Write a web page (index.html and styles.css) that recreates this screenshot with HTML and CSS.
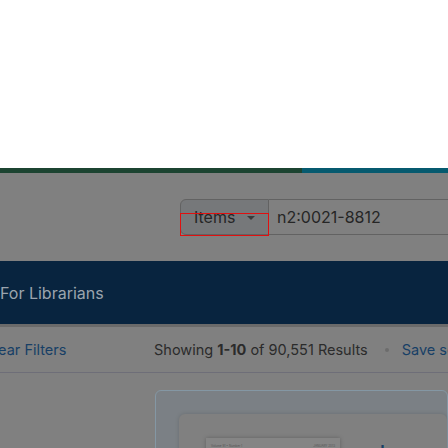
FILE: index.html
```html
<!DOCTYPE html>
<html>
<head>
<meta charset="utf-8">
<link rel="stylesheet" href="styles.css">
</head>
<body>
<div class="top"></div>
<div class="stripe"><div class="green"></div><div class="teal"></div></div>
<div class="page">
  <div class="search-row">
    <div class="search">
      <div class="select">Items <span class="caret"></span></div>
      <div class="input">n2:0021-8812</div>
      <div class="focus"></div>
    </div>
  </div>
  <div class="banner"><span class="banner-text">For Librarians</span></div>
  <div class="bar">
    <div class="clear">Clear Filters</div>
    <div class="showing">Showing <b>1-10</b> of 90,551 Results</div>
    <span class="dot"></span>
    <div class="save">Save search</div>
  </div>
  <div class="results">
    <div class="outer">
      <div class="inner">
        <div class="thumb">
          <span class="vol">Volume 91 • Number 1</span>
          <span class="date">JANUARY 2013</span>
        </div>
        <div class="title">Journal of</div>
      </div>
    </div>
  </div>
</div>
</body>
</html>
```
FILE: styles.css
```css
html, body { margin: 0; padding: 0; }
body {
  width: 448px; height: 448px; overflow: hidden;
  background: #fff;
  font-family: Inter, "Noto Sans", sans-serif;
}
.top { height: 168px; background: #fff; }
.stripe { display: flex; height: 5px; }
.green { width: 302px; background: #1c4431; }
.teal { flex: 1; background: #065a6f; }
.page { background: #808080; height: 275px; overflow: hidden; }
.search-row { padding: 26px 0 0 180px; height: 88px; box-sizing: border-box; }
.search { position: relative; display: flex; height: 36px; width: 300px; }
.select {
  width: 89px; box-sizing: border-box; flex-shrink: 0;
  border: 1px solid #626262; border-radius: 6px 0 0 6px;
  background: #76787a;
  display: flex; align-items: center; padding-left: 13px;
  font-size: 16px; color: #262626; gap: 12px;
}
.caret {
  width: 0; height: 0;
  border-left: 4px solid transparent; border-right: 4px solid transparent;
  border-top: 4px solid #3a3a3a; margin-top: 1px;
}
.input {
  flex: 1; border: 1px solid #626262; border-left: none;
  display: flex; align-items: center; padding-left: 8px;
  font-size: 16px; color: #262626; white-space: nowrap;
}
.focus {
  position: absolute; left: 0; top: 14px; width: 89px; height: 23px;
  box-sizing: border-box; border: 1px solid #e01010;
}
.banner {
  height: 63px; background: #08243f;
  display: flex; align-items: center;
  border-bottom: 3px solid #6a6a6a;
}
.banner-text { font-size: 16px; color: #9ba4ae; white-space: nowrap; }
.bar {
  display: flex; align-items: center; height: 46px;
  border-bottom: 1px solid #6e6e78; box-sizing: border-box;
  font-size: 14.5px; white-space: nowrap;
}
.bar > * { flex-shrink: 0; }
.clear { width: 154px; margin-left: -16px; color: #173f66; }
.showing { color: #2b2b2b; margin-left: 16px; }
.showing b { font-weight: 700; }
.dot { width: 4px; height: 4px; border-radius: 50%; background: #6c6c6c; margin: 0 13px 0 17px; }
.save { color: #173f66; }
.results { padding: 17px 0 0 155px; }
.outer {
  background: #7b8085; border: 1px solid #8497a4; border-radius: 6px;
  padding: 23px 0 0 23px; height: 80px;
}
.inner {
  background: #808080; border-radius: 6px; height: 80px;
  box-shadow: 0 0 4px rgba(0,0,0,0.15);
  display: flex; padding: 24px 0 0 27px; gap: 32px;
}
.thumb {
  width: 134px; height: 60px; background: #858585; flex-shrink: 0;
  box-shadow: 0 0 4px rgba(0,0,0,0.25);
  display: flex; justify-content: space-between; padding: 6px 5px 0 5px; box-sizing: border-box;
  font-size: 3px; color: #555;
}
.title { font-size: 24px; line-height: 24px; color: #173f66; margin-top: 5px; white-space: nowrap; }
```
